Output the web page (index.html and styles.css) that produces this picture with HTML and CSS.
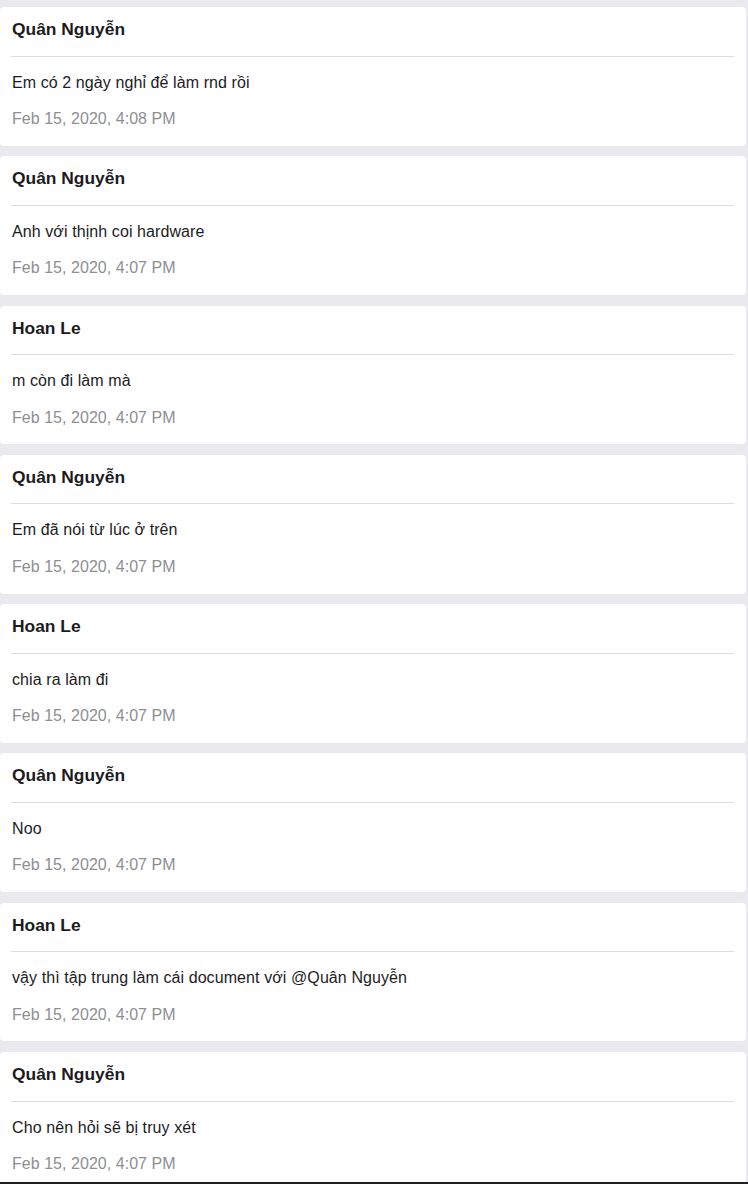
FILE: index.html
```html
<!DOCTYPE html>
<html lang="vi">
<head>
<meta charset="utf-8">
<title>Messages</title>
<link rel="stylesheet" href="styles.css">
</head>
<body>
<main class="list">
  <article class="card">
    <header class="card-head"><h2 class="author">Quân Nguyễn</h2></header>
    <div class="card-body">
      <p class="message">Em có 2 ngày nghỉ để làm rnd rồi</p>
      <p class="time">Feb 15, 2020, 4:08 PM</p>
    </div>
  </article>
  <article class="card">
    <header class="card-head"><h2 class="author">Quân Nguyễn</h2></header>
    <div class="card-body">
      <p class="message">Anh với thịnh coi hardware</p>
      <p class="time">Feb 15, 2020, 4:07 PM</p>
    </div>
  </article>
  <article class="card">
    <header class="card-head"><h2 class="author">Hoan Le</h2></header>
    <div class="card-body">
      <p class="message">m còn đi làm mà</p>
      <p class="time">Feb 15, 2020, 4:07 PM</p>
    </div>
  </article>
  <article class="card">
    <header class="card-head"><h2 class="author">Quân Nguyễn</h2></header>
    <div class="card-body">
      <p class="message">Em đã nói từ lúc ở trên</p>
      <p class="time">Feb 15, 2020, 4:07 PM</p>
    </div>
  </article>
  <article class="card">
    <header class="card-head"><h2 class="author">Hoan Le</h2></header>
    <div class="card-body">
      <p class="message">chia ra làm đi</p>
      <p class="time">Feb 15, 2020, 4:07 PM</p>
    </div>
  </article>
  <article class="card">
    <header class="card-head"><h2 class="author">Quân Nguyễn</h2></header>
    <div class="card-body">
      <p class="message">Noo</p>
      <p class="time">Feb 15, 2020, 4:07 PM</p>
    </div>
  </article>
  <article class="card">
    <header class="card-head"><h2 class="author">Hoan Le</h2></header>
    <div class="card-body">
      <p class="message">vậy thì tập trung làm cái document với @Quân Nguyễn</p>
      <p class="time">Feb 15, 2020, 4:07 PM</p>
    </div>
  </article>
  <article class="card">
    <header class="card-head"><h2 class="author">Quân Nguyễn</h2></header>
    <div class="card-body">
      <p class="message">Cho nên hỏi sẽ bị truy xét</p>
      <p class="time">Feb 15, 2020, 4:07 PM</p>
    </div>
  </article>
</main>
<div class="bottom-edge"></div>
</body>
</html>
```

FILE: styles.css
```css
* { box-sizing: border-box; }

html, body {
  margin: 0;
  padding: 0;
  background: #e9e9ee;
  font-family: "Liberation Sans", Arial, sans-serif;
  color: #1c1c1e;
}

body {
  height: 1184px;
  overflow: hidden;
}

.list {
  display: flex;
  flex-direction: column;
  gap: 10.6px;
  padding: 7px 2px 0 0;
}

.card {
  background: #ffffff;
  border-radius: 4px;
}

.card-head {
  margin: 0 12px 0 11px;
  padding: 13px 0 16px 1px;
  border-bottom: 1px solid #dcdcdf;
}

.author {
  margin: 0;
  font-size: 17.4px;
  font-weight: 700;
  line-height: 19.5px;
  color: #1c1c1e;
}

.card-body {
  padding: 17px 12px 17.4px 12px;
}

.message {
  margin: 0 0 18px;
  font-size: 16px;
  line-height: 18.4px;
  letter-spacing: 0.09px;
  color: #1c1c1e;
}

.time {
  margin: 0;
  font-size: 16px;
  line-height: 18.4px;
  letter-spacing: 0.04px;
  color: #8e8e93;
}

.bottom-edge {
  position: fixed;
  left: 0;
  right: 0;
  bottom: 0;
  height: 2px;
  background: #1e1e1e;
}
```
